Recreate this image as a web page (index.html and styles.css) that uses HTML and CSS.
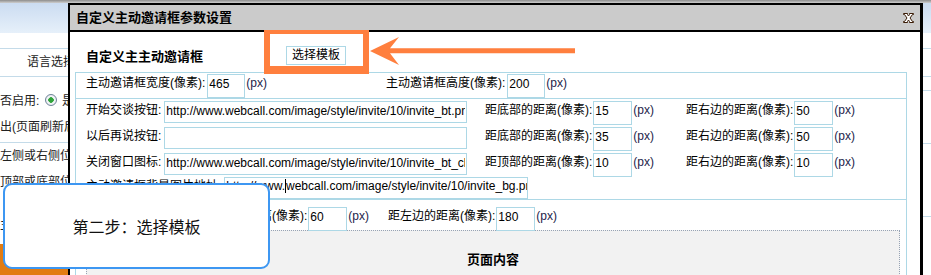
FILE: index.html
```html
<!DOCTYPE html>
<html lang="zh-CN">
<head>
    <meta charset="UTF-8">
    <title>自定义主动邀请框参数设置</title>
    <link rel="stylesheet" href="styles.css">
</head>
<body>
    <div class="topline"></div>
    <div class="cols">
        <div class="col-left">
            <div class="head"></div>
            <div class="l-gap sep"></div>
            <div class="l-lang sep">语言选择:</div>
            <div class="l-enable sep">
                <div class="ltext indent">是否启用: <i class="radio"></i> 是</div>
                <div class="ltext indent">弹出(页面刷新后)</div>
            </div>
            <div class="l-pos">
                <div class="ltext">左侧或右侧位置</div>
                <div class="ltext">顶部或底部位置</div>
                <div class="ltext low">主动邀请框</div>
            </div>
            <div class="l-orange"></div>
        </div>
        <div class="col-right">
            <div class="head"></div>
            <div class="r1 sep"></div>
            <div class="r2 sep"></div>
            <div class="r3 sep"></div>
            <div class="r4 sep"></div>
            <div class="r5 sep"></div>
        </div>
    </div>

    <div class="dialog">
        <div class="dlg-title">
            <span>自定义主动邀请框参数设置</span>
            <svg class="close" width="11" height="10" viewBox="0 0 11 10">
                <path d="M0.5 0.5H4.5V1.5L5.5 3L6.5 1.5V0.5H10.5V1.5H9.5L7 5L9.5 8.5H10.5V9.5H6.5V8.5L5.5 7L4.5 8.5V9.5H0.5V8.5H1.5L4 5L1.5 1.5H0.5Z" fill="#fff" stroke="#3b1c06" stroke-width="1"/>
            </svg>
        </div>
        <div class="dlg-body">
            <div class="dlg-head">
                <h3>自定义主主动邀请框</h3>
                <button class="btn">选择模板</button>
            </div>
            <div class="box">
                <div class="row row1">
                    <div class="cell w300">
                        <span class="lb">主动邀请框宽度(像素):</span>
                        <input class="in" value="465">
                        <span class="lb px">(px)</span>
                    </div>
                    <div class="cell">
                        <span class="lb">主动邀请框高度(像素):</span>
                        <input class="in" value="200">
                        <span class="lb px">(px)</span>
                    </div>
                </div>
                <div class="row row2">
                    <div class="line">
                        <div class="cell w399">
                            <span class="lb">开始交谈按钮:</span>
                            <input class="in url" value="http://www.webcall.com/image/style/invite/10/invite_bt.png">
                        </div>
                        <div class="cell w201">
                            <span class="lb">距底部的距离(像素):</span>
                            <input class="in sm" value="15">
                            <span class="lb px">(px)</span>
                        </div>
                        <div class="cell">
                            <span class="lb">距右边的距离(像素):</span>
                            <input class="in sm" value="50">
                            <span class="lb px">(px)</span>
                        </div>
                    </div>
                    <div class="line">
                        <div class="cell w399">
                            <span class="lb">以后再说按钮:</span>
                            <input class="in url" value="">
                        </div>
                        <div class="cell w201">
                            <span class="lb">距底部的距离(像素):</span>
                            <input class="in sm" value="35">
                            <span class="lb px">(px)</span>
                        </div>
                        <div class="cell">
                            <span class="lb">距右边的距离(像素):</span>
                            <input class="in sm" value="50">
                            <span class="lb px">(px)</span>
                        </div>
                    </div>
                    <div class="line">
                        <div class="cell w399">
                            <span class="lb">关闭窗口图标:</span>
                            <input class="in url" value="http://www.webcall.com/image/style/invite/10/invite_bt_close.png">
                        </div>
                        <div class="cell w201">
                            <span class="lb">距顶部的距离(像素):</span>
                            <input class="in sm" value="10">
                            <span class="lb px">(px)</span>
                        </div>
                        <div class="cell">
                            <span class="lb">距右边的距离(像素):</span>
                            <input class="in sm" value="10">
                            <span class="lb px">(px)</span>
                        </div>
                    </div>
                    <div class="line last">
                        <div class="cell">
                            <span class="lb">主动邀请框背景图片地址:</span>
                            <div class="in url bg">http://www.<i class="caret"></i>webcall.com/image/style/invite/10/invite_bg.png</div>
                        </div>
                    </div>
                </div>
                <div class="row row3">
                    <div class="line">
                        <div class="cell w114">
                            <span class="lb">邀请框位置:</span>
                        </div>
                        <div class="cell w188">
                            <span class="lb">距顶部的距离(像素):</span>
                            <input class="in sm" value="60">
                            <span class="lb px">(px)</span>
                        </div>
                        <div class="cell">
                            <span class="lb">距左边的距离(像素):</span>
                            <input class="in sm" value="180">
                            <span class="lb px">(px)</span>
                        </div>
                    </div>
                    <div class="preview">页面内容</div>
                </div>
            </div>
        </div>
    </div>

    <div class="mark"></div>
    <svg class="arrow" width="212" height="32" viewBox="0 0 212 32">
        <polygon points="5,16 34,2 25,13.3 210,13.3 210,18.3 25,18.3 34,30" fill="#ff7f3e"/>
    </svg>

    <div class="callout">第二步：选择模板</div>
</body>
</html>
```

FILE: styles.css
```css
body {
    margin: 0;
    width: 931px;
    height: 275px;
    overflow: hidden;
    position: relative;
    background: #fff;
    color: #000;
    font-family: "Liberation Sans", "Noto Sans CJK SC", sans-serif;
    font-size: 12px;
}
.topline {
    height: 3px;
    background: linear-gradient(#8c8c8c, #cfcfcf);
}
.cols {
    display: flex;
    justify-content: space-between;
}
.col-left {
    width: 68px;
    height: 272px;
    display: flex;
    flex-direction: column;
    overflow: hidden;
    white-space: nowrap;
}
.col-right {
    width: 8px;
    height: 272px;
    display: flex;
    flex-direction: column;
}
.head {
    height: 30px;
    flex-shrink: 0;
    background: linear-gradient(#cbdcf1, #e6f0fa);
}
.sep {
    flex-shrink: 0;
    border-bottom: 1px solid #c4dbe9;
}
.l-gap {
    height: 15px;
}
.l-lang {
    height: 27px;
    line-height: 27px;
    padding-left: 27px;
    color: #222;
}
.l-enable {
    height: 66px;
    box-sizing: border-box;
    padding-top: 11px;
}
.ltext {
    line-height: 26px;
    color: #222;
}
.indent {
    margin-left: -12px;
}
.ltext.low {
    margin-top: 17px;
}
.radio {
    display: inline-block;
    width: 10px;
    height: 10px;
    border: 1px solid #6f8398;
    border-radius: 50%;
    background: radial-gradient(circle, #2fa33a 0 2.5px, #f4f6f8 3px, #dfe4ea 100%);
    vertical-align: -1px;
    margin: 0 2px;
}
.l-pos {
    flex-grow: 1;
}
.l-orange {
    height: 31px;
    flex-shrink: 0;
    background: #e27c12;
}
.r1 { height: 15px; }
.r2 { height: 27px; }
.r3 { height: 13px; }
.r4 { height: 52px; }
.r5 { height: 72px; }

.dialog {
    position: absolute;
    left: 68px;
    top: 3px;
    width: 850px;
    height: 290px;
    border: 2px solid #000;
    border-right-width: 3px;
    background: #fff;
    overflow: hidden;
}
.dlg-title {
    height: 27px;
    box-sizing: border-box;
    padding: 0 6px 2px;
    background: #cbcbcb;
    border-bottom: 2px solid #000;
    display: flex;
    align-items: center;
    justify-content: space-between;
    font-size: 13px;
    font-weight: bold;
}
.close {
    display: block;
    margin-top: 3px;
}
.dlg-body {
    padding: 0 13px 0 5px;
}
.dlg-head {
    height: 40px;
    box-sizing: border-box;
    padding: 7px 0 0 11px;
    display: flex;
    align-items: center;
}
.dlg-head h3 {
    margin: 0;
    width: 200px;
    font-size: 13px;
    font-weight: bold;
}
.btn {
    height: 19px;
    padding: 0 5px;
    border: 1px solid #add8e6;
    background: #fff;
    font-family: "Liberation Sans", "Noto Sans CJK SC", sans-serif;
    font-size: 12px;
    line-height: 17px;
    color: #000;
}
.box {
    border: 1px solid #add8e6;
}
.row {
    border-bottom: 1px solid #add8e6;
    padding-left: 10px;
}
.row1 {
    height: 26px;
    box-sizing: border-box;
    padding-top: 1px;
    display: flex;
    align-items: flex-start;
}
.line {
    display: flex;
    align-items: flex-start;
    margin-top: 2px;
    height: 24px;
}
.line.last {
    margin-top: 0;
    height: 22px;
}
.row3 {
    border-bottom: none;
    padding-top: 7px;
}
.row3 .line {
    margin-top: 0;
}
.cell {
    display: flex;
    align-items: flex-start;
    flex-shrink: 0;
}
.w300 { width: 300px; }
.w399 { width: 399px; }
.w201 { width: 201px; }
.w114 { width: 114px; }
.w188 { width: 188px; }
.lb {
    line-height: 18px;
    white-space: nowrap;
}
.px {
    margin-left: 1px;
    color: #1d1d4a;
}
.in {
    box-sizing: border-box;
    width: 38px;
    height: 24px;
    margin: 0 0 0 2px;
    padding: 0 1px 5px;
    border: 1px solid #add8e6;
    background: #fff;
    color: #000;
    font-family: "Liberation Sans", sans-serif;
    font-size: 12px;
    outline: none;
}
.in.sm {
    width: 39px;
    margin-left: 1px;
}
.in.url {
    width: 303px;
    height: 22px;
    margin-left: 3px;
    padding: 0 1px 3px;
}
.in.bg {
    width: 304px;
    line-height: 17px;
    white-space: nowrap;
    overflow: hidden;
}
.caret {
    display: inline-block;
    width: 0;
    height: 14px;
    border-left: 1px solid #000;
    vertical-align: -3px;
}
.preview {
    margin: -1px 6px 0 0;
    height: 70px;
    box-sizing: border-box;
    padding-top: 20px;
    border: 1px dotted #97a3b4;
    background: #f2f2f2;
    text-align: center;
    font-size: 13px;
    font-weight: bold;
    line-height: 18px;
}

.mark {
    position: absolute;
    left: 264px;
    top: 30px;
    width: 93px;
    height: 32px;
    border: solid #ff7f3e;
    border-width: 4px 6px 8px 6px;
}
.arrow {
    position: absolute;
    left: 365px;
    top: 35px;
}
.callout {
    position: absolute;
    left: 3px;
    top: 183px;
    width: 263px;
    height: 82px;
    border: 2px solid #3d97f2;
    border-radius: 9px;
    background: #fff;
    display: flex;
    align-items: center;
    justify-content: center;
    font-family: "Noto Sans CJK SC", sans-serif;
    font-size: 16px;
    color: #111;
}
```
